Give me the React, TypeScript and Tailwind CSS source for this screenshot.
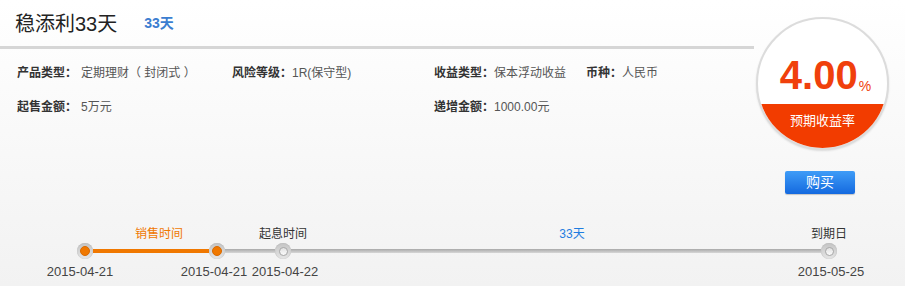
import React from "react";

const FONT = '"Liberation Sans", "Noto Sans CJK SC", sans-serif';

function Field({ label, value, className = "" }: { label: string; value: string; className?: string }) {
  return (
    <div className={`flex items-center whitespace-nowrap ${className}`}>
      <span className="font-bold text-[#333]">{label}</span>
      <span className="text-[#555]">{value}</span>
    </div>
  );
}

function Node({ active }: { active: boolean }) {
  return (
    <div className="flex h-4 w-4 shrink-0 items-center justify-center rounded-full bg-gradient-to-b from-[#c4c4c4] to-[#e6e6e6] shadow-[inset_0_0_1px_rgba(0,0,0,0.25)]">
      {active ? (
        <div className="h-[10px] w-[10px] rounded-full border border-[#d96a00] bg-[#f07800]" />
      ) : (
        <div className="h-[9px] w-[9px] rounded-full border border-[#a8a8a8] bg-gradient-to-b from-[#e2e2e2] to-[#fafafa]" />
      )}
    </div>
  );
}

function GreyBar({ w }: { w: string }) {
  return <div className={`h-1 ${w} shrink-0 bg-gradient-to-b from-[#a9a9a9] to-[#d6d6d6]`} />;
}

export default function App() {
  return (
    <div
      className="h-[286px] w-[905px] overflow-hidden bg-gradient-to-b from-white to-[#f2f2f2] text-[12px]"
      style={{ fontFamily: FONT }}
    >
      <div className="flex h-[224px]">
        {/* product details */}
        <div className="w-[754px] shrink-0">
          <div className="flex h-[49px] items-center border-b-[3px] border-[#d6d6d6] pl-[15px] pt-[1px]">
            <h1 className="text-[20px] leading-7 text-[#222]">稳添利33天</h1>
            <span className="ml-[27px] text-[14px] font-bold text-[#3b7dd0]">33天</span>
          </div>
          <div className="flex pl-[17px] pt-[14px] leading-5">
            <Field label="产品类型：" value="定期理财（ 封闭式 ）" className="w-[215px] gap-1" />
            <Field label="风险等级：" value="1R(保守型)" className="w-[202px]" />
            <Field label="收益类型：" value="保本浮动收益" className="w-[152px]" />
            <Field label="币种：" value="人民币" />
          </div>
          <div className="mt-[14px] flex pl-[17px] leading-5">
            <Field label="起售金额：" value="5万元" className="w-[417px] gap-1" />
            <Field label="递增金额：" value="1000.00元" />
          </div>
        </div>

        {/* yield badge and purchase */}
        <div className="flex flex-1 flex-col items-start">
          <div className="ml-[2px] mt-[17px] flex h-[133px] w-[133px] flex-col overflow-hidden rounded-full border-[2px] border-[#dcdcdc] bg-white shadow-[0_1px_2px_rgba(0,0,0,0.12)]">
            <div className="flex h-[85px] items-end justify-center pb-[9px] pl-[6px] text-[#f0400c]">
              <span className="text-[40px] font-bold leading-[40px]">4.00</span>
              <span className="mb-[1px] ml-[1px] text-[14px] leading-4">%</span>
            </div>
            <div className="flex flex-1 justify-center bg-[#f23c00] pt-[9px] text-[13px] leading-4 text-white">
              预期收益率
            </div>
          </div>
          <button className="ml-[31px] mt-[21px] h-[23px] w-[70px] rounded-[2px] bg-gradient-to-b from-[#3f9cf7] to-[#1469df] text-[14px] leading-[23px] text-white shadow-[0_1px_1px_rgba(0,0,0,0.2)]">
            购买
          </button>
        </div>
      </div>

      {/* product timeline */}
      <div>
        <div className="flex h-[19px] items-center leading-4">
          <span className="ml-[119px] w-20 text-center text-[12px] text-[#f07800]">销售时间</span>
          <span className="ml-[44px] w-20 text-center text-[12px] text-[#333]">起息时间</span>
          <span className="ml-[209px] w-20 text-center text-[12px] text-[#1f7de0]">33天</span>
          <span className="ml-[177px] w-20 text-center text-[12px] text-[#333]">到期日</span>
        </div>
        <div className="flex h-4 items-center pl-[77px]">
          <Node active />
          <div className="h-1 w-[116px] shrink-0 bg-[#f07800]" />
          <Node active />
          <GreyBar w="w-[50px]" />
          <Node active={false} />
          <GreyBar w="w-[530px]" />
          <Node active={false} />
        </div>
        <div className="mt-[5px] flex text-[13px] leading-4 text-[#444]">
          <span className="ml-[45px] w-[70px] text-center">2015-04-21</span>
          <span className="ml-[64px] w-[70px] text-center">2015-04-21</span>
          <span className="ml-[1px] w-[70px] text-center">2015-04-22</span>
          <span className="ml-[476px] w-[70px] text-center">2015-05-25</span>
        </div>
      </div>
    </div>
  );
}
